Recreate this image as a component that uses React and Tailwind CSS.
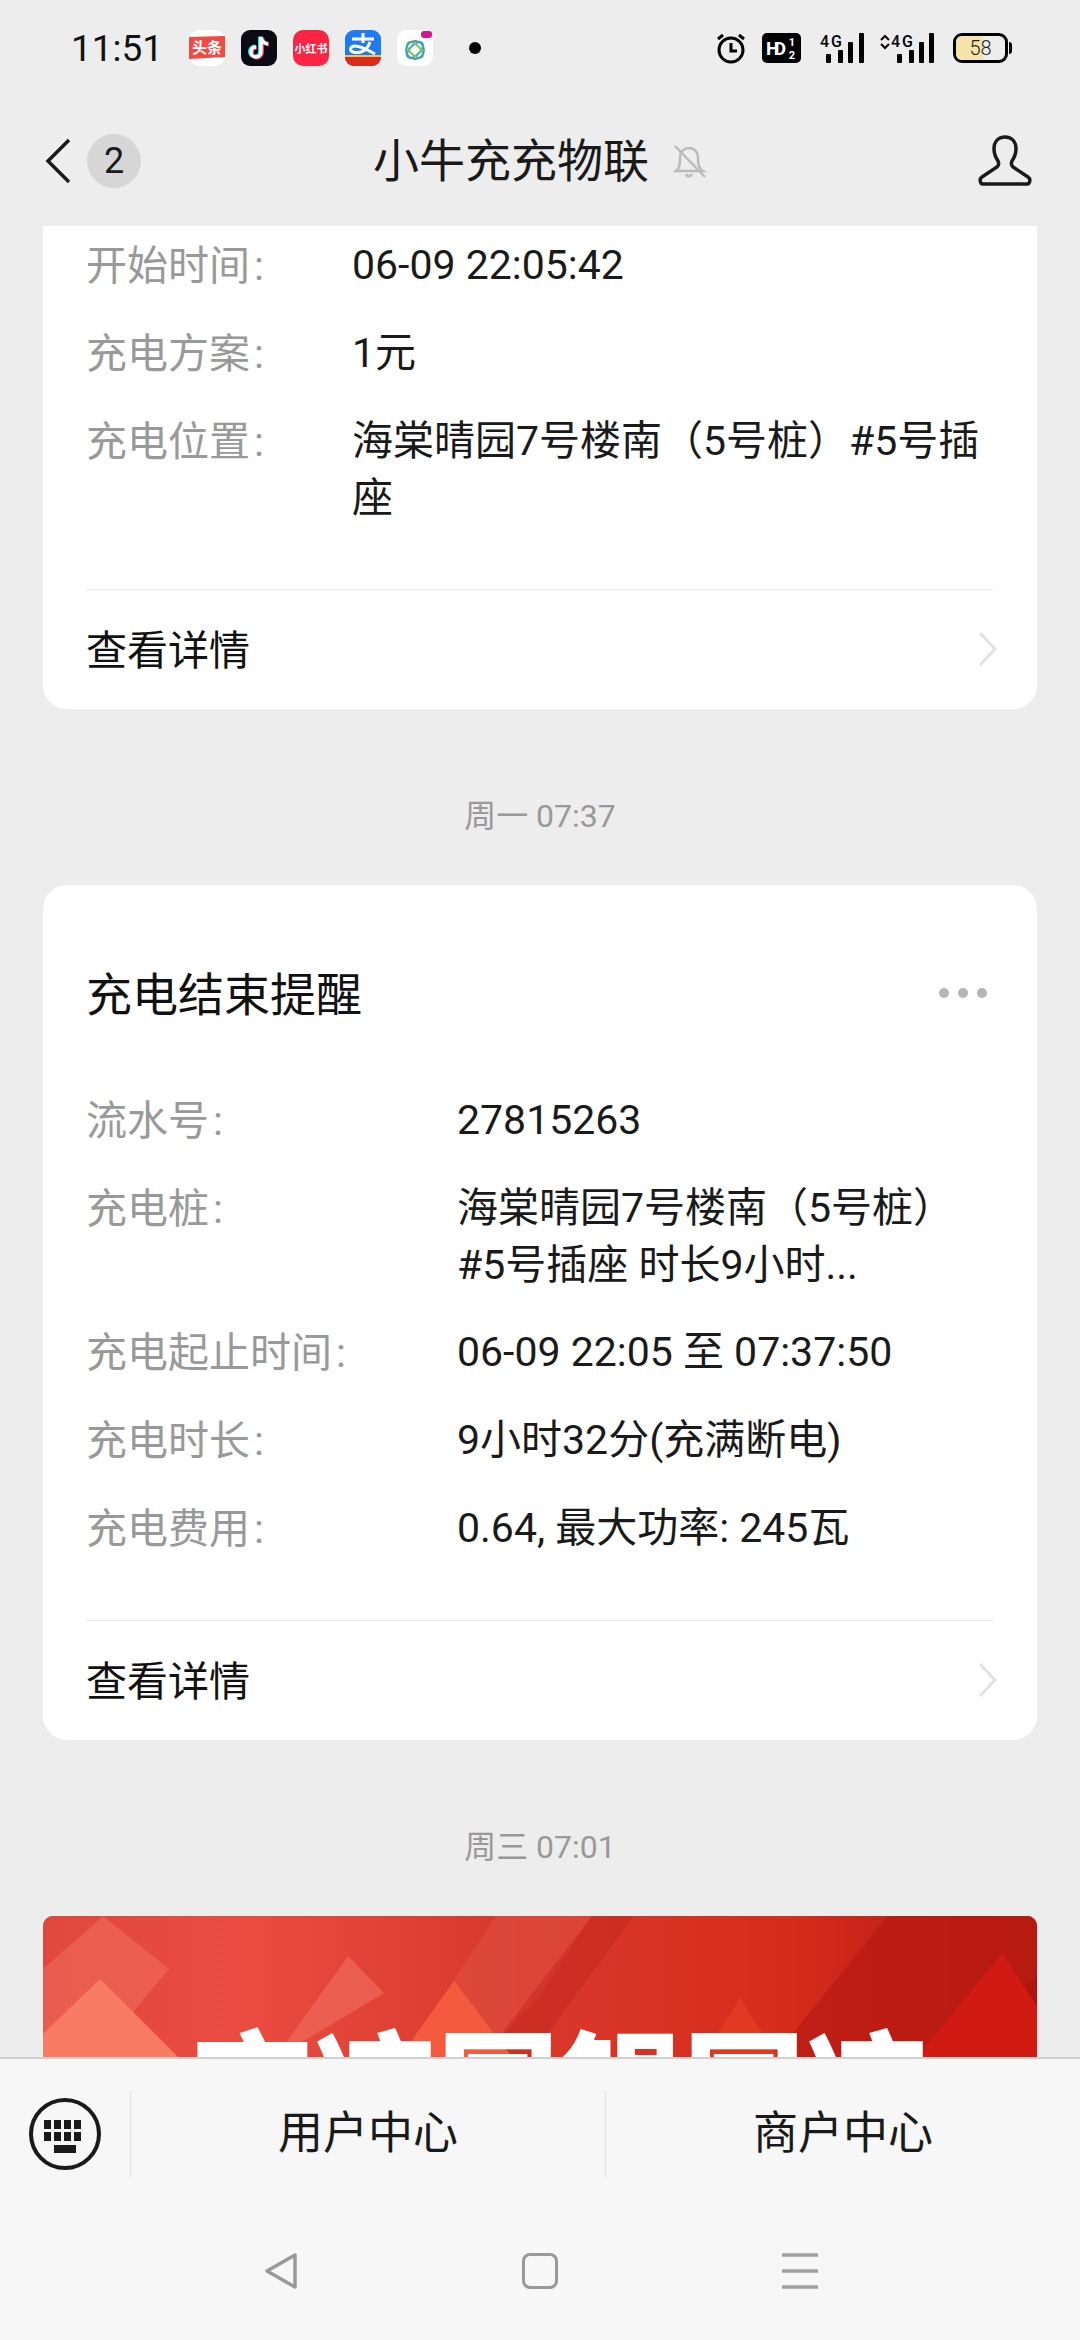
import React from 'react';

const FONT = { fontFamily: 'Roboto, "Noto Sans CJK SC", sans-serif' };

const AppIcons = () => (
  <div className="ml-[26px] flex items-center gap-[16px]">
    <svg width="36" height="36" viewBox="0 0 36 36">
      <rect width="36" height="36" rx="10" fill="#fff" />
      <path d="M0 7 L36 6 L36 27 L0 29 Z" fill="#f04a43" />
      <text x="18" y="23" fontSize="15" fontWeight="700" fill="#fff" textAnchor="middle">头条</text>
    </svg>
    <svg width="36" height="36" viewBox="0 0 36 36">
      <rect width="36" height="36" rx="9" fill="#0b0b14" />
      <path d="M20 7v15a5 5 0 1 1-5-5M20 7c.5 4 3 6.500 7 7" fill="none" stroke="#25e0e6" strokeWidth="4" transform="translate(-1 -.5)" />
      <path d="M20 7v15a5 5 0 1 1-5-5M20 7c.5 4 3 6.500 7 7" fill="none" stroke="#fe2c55" strokeWidth="4" transform="translate(1 .5)" />
      <path d="M20 7v15a5 5 0 1 1-5-5M20 7c.5 4 3 6.500 7 7" fill="none" stroke="#fff" strokeWidth="3.400" />
    </svg>
    <svg width="36" height="36" viewBox="0 0 36 36">
      <rect width="36" height="36" rx="10" fill="#fb2543" />
      <text x="18" y="23" fontSize="11" fontWeight="700" fill="#fff" textAnchor="middle">小红书</text>
    </svg>
    <svg width="36" height="36" viewBox="0 0 36 36">
      <defs>
        <clipPath id="ali"><rect width="36" height="36" rx="9" /></clipPath>
      </defs>
      <g clipPath="url(#ali)">
        <rect width="36" height="36" fill="#1f7cf0" />
        <rect y="26" width="36" height="10" fill="#d92a1c" />
        <rect y="25" width="36" height="2" fill="#f6c544" />
      </g>
      <path d="M7 9h22M18 3v10M25 12c-3 9-10 12-17 10-4-1-3-6 2-6 6 0 13 4 20 8" fill="none" stroke="#fff" strokeWidth="3" />
    </svg>
    <svg width="36" height="36" viewBox="0 0 36 36">
      <rect width="36" height="36" rx="9" fill="#fff" />
      <g fill="none" strokeWidth="2">
        <ellipse cx="18" cy="20" rx="10" ry="5" transform="rotate(-45 18 20)" stroke="#41a7c9" />
        <ellipse cx="18" cy="20" rx="10" ry="5" transform="rotate(45 18 20)" stroke="#8cc152" />
        <circle cx="18" cy="20" r="9" stroke="#3f9fb5" />
      </g>
      <rect x="24" y="1" width="11" height="7" rx="3" fill="#d6168b" />
    </svg>
    <div className="ml-[20px] h-[12px] w-[12px] rounded-full bg-black" />
  </div>
);

const StatusIcons = () => (
  <div className="flex items-center">
    <svg width="30" height="32" viewBox="0 0 30 32" className="mr-[16px]">
      <circle cx="15" cy="18" r="12" fill="none" stroke="#000" strokeWidth="3" />
      <path d="M15 11v8h6" fill="none" stroke="#000" strokeWidth="3" />
      <path d="M2 7l5-4M28 7l-5-4" stroke="#000" strokeWidth="3" />
    </svg>
    <svg width="39" height="30" viewBox="0 0 39 30" className="mr-[19px]">
      <rect width="39" height="30" rx="5" fill="#000" />
      <text x="4" y="22" fontSize="19" fontWeight="700" fill="#fff" fontFamily="Roboto" textLength="20">HD</text>
      <text x="30" y="13" fontSize="11" fontWeight="700" fill="#fff" fontFamily="Roboto" textAnchor="middle">1</text>
      <text x="30" y="26" fontSize="11" fontWeight="700" fill="#fff" fontFamily="Roboto" textAnchor="middle">2</text>
    </svg>
    <svg width="44" height="32" viewBox="0 0 44 32" className="mr-[15px]">
      <text x="0" y="15" fontSize="16" fontWeight="500" fill="#000" fontFamily="Roboto" textLength="22">4G</text>
      <rect x="6" y="22" width="5" height="9" rx="1" />
      <rect x="18" y="18" width="5" height="13" rx="1" />
      <rect x="28" y="10" width="5" height="21" rx="1" />
      <rect x="39" y="1" width="5" height="30" rx="1" />
    </svg>
    <svg width="55" height="32" viewBox="0 0 55 32" className="mr-[19px]">
      <path d="M2 8l4-4 4 4M2 12l4 4 4-4" fill="none" stroke="#000" strokeWidth="2" />
      <text x="12" y="15" fontSize="16" fontWeight="500" fill="#000" fontFamily="Roboto" textLength="22">4G</text>
      <rect x="18" y="22" width="5" height="9" rx="1" />
      <rect x="30" y="18" width="5" height="13" rx="1" />
      <rect x="40" y="10" width="5" height="21" rx="1" />
      <rect x="50" y="1" width="5" height="30" rx="1" />
    </svg>
    <div className="relative flex h-[30px] w-[55px] items-center justify-center overflow-hidden rounded-[9px] border-[3px] border-black">
      <div className="absolute inset-y-0 left-0 w-[27px] bg-[#f5e3a9]" />
      <span className="relative text-[20px] leading-none font-light text-[#222]">58</span>
    </div>
    <div className="ml-[1px] h-[12px] w-[3px] rounded-r bg-black" />
  </div>
);

const Row = ({ label, value, labelClass }) => (
  <div className="flex min-h-[88px] py-[15px]">
    <div className={`shrink-0 leading-[58px] text-[#999] ${labelClass}`}>
      {label}<span className="ml-[4px]">:</span>
    </div>
    <div className="pr-[40px] leading-[57px] text-[#1a1a1a]">{value}</div>
  </div>
);

const Footer = () => (
  <div className="mr-[44px]">
    <div className="mt-[47px] h-[1px] bg-[#e8e8e8]" />
    <div className="flex h-[119px] items-center justify-between pt-[5px] text-[#111]">
      <span>查看详情</span>
      <svg width="20" height="36" viewBox="0 0 20 36" className="-mr-[5px] -translate-y-[3px]">
        <path d="M2 2l15 16L2 34" fill="none" stroke="#e2e2e2" strokeWidth="3" />
      </svg>
    </div>
  </div>
);

const Stamp = ({ children }) => (
  <div className="flex h-[176px] items-center justify-center pt-[38px] text-[32px] text-[#999]">{children}</div>
);

const Banner = () => (
  <div className="relative mx-[43px] h-[142px] overflow-hidden rounded-t-[10px] bg-[#d8352a]">
    <svg className="absolute inset-0" width="994" height="142" viewBox="0 0 994 142">
      <defs>
        <linearGradient id="bannerBg" x1="0" x2="1" y1="0" y2="0">
          <stop offset="0" stopColor="#e0483e" />
          <stop offset=".2" stopColor="#ea4c40" />
          <stop offset=".45" stopColor="#d93a2e" />
          <stop offset=".75" stopColor="#d62c1c" />
          <stop offset="1" stopColor="#ad1410" />
        </linearGradient>
      </defs>
      <rect width="994" height="142" fill="url(#bannerBg)" />
      <path d="M453 0H549L500 75 440 142H360Z" fill="#e0503f" opacity=".6" />
      <path d="M549 0H591L487 142H440Z" fill="#c5281d" opacity=".55" />
      <path d="M845 0H994V60L900 142H730Z" fill="#b91c12" opacity=".8" />
      <path d="M60 0 L126 53 L70 120 L0 142 V53Z" fill="#f0705f" opacity=".55" />
      <path d="M305 40 L341 77 L232 142 Z" fill="#f0705f" opacity=".6" />
      <path d="M57 63 L136 142 H0 V118Z" fill="#f87c63" />
      <path d="M411 65 L470 142 H356Z" fill="#f45a3d" />
      <path d="M697 82 L735 142 H659Z" fill="#e23a22" />
      <path d="M959 37 L994 90 V142 H873Z" fill="#d11a12" />
    </svg>
    <div className="absolute top-[115px] left-[148px] text-[123px] leading-none font-black whitespace-nowrap text-white">
      京凉国银国凉
    </div>
  </div>
);

const App = () => {
  return (
    <div style={FONT} className="flex h-[2340px] w-[1080px] flex-col overflow-hidden bg-[#ededed] text-[41px]">
      {/* status bar */}
      <div className="flex h-[96px] shrink-0 items-center justify-between pr-[68px] pl-[71px]">
        <div className="flex items-center">
          <span className="text-[37px] leading-none text-[#111]">11:51</span>
          <AppIcons />
        </div>
        <StatusIcons />
      </div>

      {/* nav */}
      <div className="relative flex h-[130px] shrink-0 items-center justify-between pr-[48px] pl-[45px]">
        <div className="flex items-center gap-[16px]">
          <svg width="26" height="46" viewBox="0 0 26 46">
            <path d="M24 2L3 23l21 21" fill="none" stroke="#1a1a1a" strokeWidth="3.500" />
          </svg>
          <div className="flex h-[54px] w-[54px] items-center justify-center rounded-full bg-[#d6d6d6] text-[36px] text-[#1a1a1a]">2</div>
        </div>
        <div className="absolute inset-x-0 flex items-center justify-center gap-[24px] text-[46px] text-[#1a1a1a]">
          <span>小牛充充物联</span>
          <svg width="34" height="38" viewBox="0 0 34 38">
            <path d="M3 29c4-3 4-8 4-14 0-5 4-9 9-9s9 4 9 9c0 6 0 11 5 14Z M13 32c1 3 5 3 6 0" fill="none" stroke="#bbb" strokeWidth="2.500" />
            <path d="M2 4l30 31" stroke="#bbb" strokeWidth="2.500" />
          </svg>
        </div>
        <svg width="54" height="52" viewBox="0 0 54 52">
          <path d="M27 2c-7 0-11 5-11 12 0 5 2 9 4 12 1 2 1 4-1 6L4 42c-3 2-2 7 1 7h44c3 0 4-5 1-7L35 32c-2-2-2-4-1-6 2-3 4-7 4-12 0-7-4-12-11-12Z" fill="none" stroke="#1a1a1a" strokeWidth="3.500" />
        </svg>
      </div>

      {/* messages */}
      <div className="min-h-0 flex-1 overflow-hidden">
        <div className="mx-[43px] -mt-[4px] rounded-b-[24px] bg-white pl-[43px]">
          <Row label="开始时间" value="06-09 22:05:42" labelClass="w-[266px]" />
          <Row label="充电方案" value="1元" labelClass="w-[266px]" />
          <Row label="充电位置" value="海棠晴园7号楼南（5号桩）#5号插座" labelClass="w-[266px]" />
          <Footer />
        </div>

        <Stamp>周一 07:37</Stamp>

        <div className="mx-[43px] rounded-[24px] bg-white pl-[43px]">
          <div className="flex h-[192px] items-end justify-between pr-[50px] pb-[52px] text-[46px] text-[#111]">
            <span className="leading-[60px]">充电结束提醒</span>
            <div className="mb-[27px] flex gap-[9px]">
              <div className="h-[10px] w-[10px] rounded-full bg-[#b5b5b5]" />
              <div className="h-[10px] w-[10px] rounded-full bg-[#b5b5b5]" />
              <div className="h-[10px] w-[10px] rounded-full bg-[#b5b5b5]" />
            </div>
          </div>
          <Row label="流水号" value="27815263" labelClass="w-[371px]" />
          <Row label="充电桩" value={<>海棠晴园7号楼南（5号桩）<br />#5号插座 时长9小时...</>} labelClass="w-[371px]" />
          <Row label="充电起止时间" value="06-09 22:05 至 07:37:50" labelClass="w-[371px]" />
          <Row label="充电时长" value="9小时32分(充满断电)" labelClass="w-[371px]" />
          <Row label="充电费用" value="0.64, 最大功率: 245瓦" labelClass="w-[371px]" />
          <Footer />
        </div>

        <Stamp>周三 07:01</Stamp>
        <Banner />
      </div>

      {/* bottom menu */}
      <div className="h-[283px] shrink-0 border-t-2 border-[#d0d0d0] bg-[#f7f7f7]">
        <div className="flex h-[118px] items-center pt-[32px]">
          <div className="flex w-[130px] shrink-0 justify-center">
            <svg width="72" height="72" viewBox="0 0 72 72">
              <circle cx="36" cy="36" r="34" fill="none" stroke="#1a1a1a" strokeWidth="4" />
              <g fill="#1a1a1a">
                <rect x="15" y="22" width="7" height="9" />
                <rect x="25" y="22" width="7" height="9" />
                <rect x="35" y="22" width="7" height="9" />
                <rect x="45" y="22" width="7" height="9" />
                <rect x="15" y="34" width="7" height="9" />
                <rect x="25" y="34" width="7" height="9" />
                <rect x="35" y="34" width="7" height="9" />
                <rect x="45" y="34" width="7" height="9" />
                <rect x="25" y="47" width="22" height="8" />
              </g>
            </svg>
          </div>
          <div className="flex h-[86px] flex-1 items-center justify-center border-l border-[#e2e2e2] text-[45px] text-[#1a1a1a]">用户中心</div>
          <div className="flex h-[86px] flex-1 items-center justify-center border-l border-[#e2e2e2] text-[45px] text-[#1a1a1a]">商户中心</div>
        </div>
        <div className="flex h-[163px] items-center justify-center gap-[224px] pt-[24px] pl-[2px]">
          <svg width="34" height="36" viewBox="0 0 34 36">
            <path d="M31 2L3 18l28 16Z" fill="none" stroke="#999" strokeWidth="3.500" strokeLinejoin="round" />
          </svg>
          <div className="h-[36px] w-[36px] rounded-[8px] border-[3px] border-[#999]" />
          <svg width="36" height="36" viewBox="0 0 36 36">
            <path d="M0 2h36M0 18h36M0 34h36" stroke="#a0a0a0" strokeWidth="3.500" />
          </svg>
        </div>
      </div>
    </div>
  );
};

export default App;
